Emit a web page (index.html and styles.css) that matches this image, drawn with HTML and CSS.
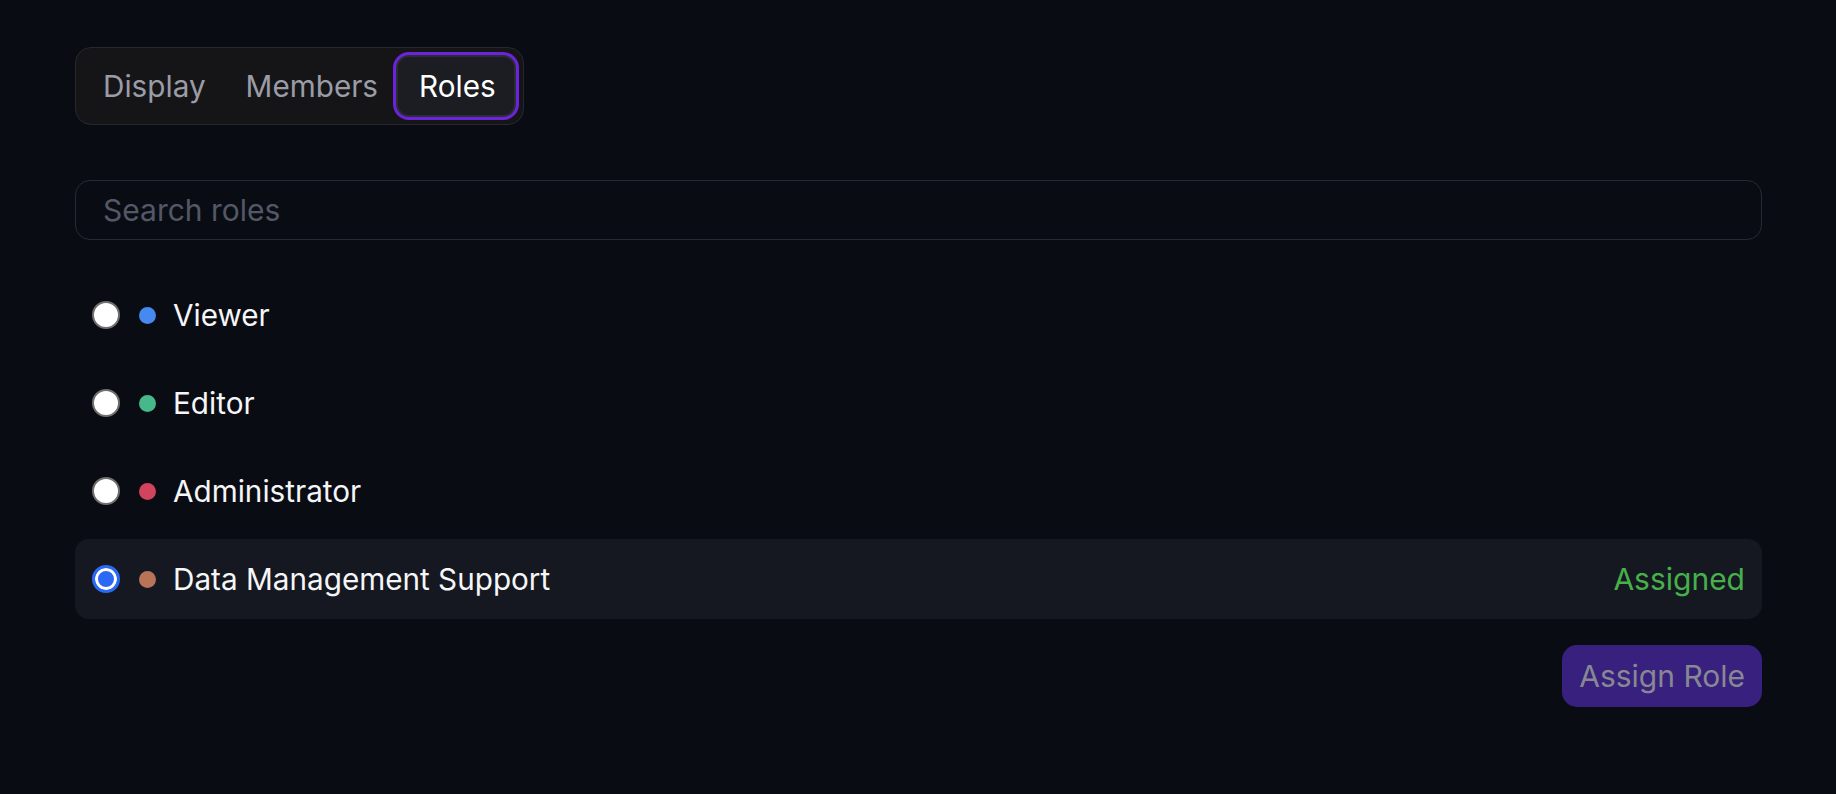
FILE: index.html
```html
<!DOCTYPE html>
<html lang="en">
<head>
<meta charset="utf-8">
<title>Roles</title>
<link rel="stylesheet" href="styles.css">
</head>
<body>
<main class="page">
  <div class="tabs">
    <button class="tab">Display</button>
    <button class="tab">Members</button>
    <button class="tab tab-active">Roles</button>
  </div>

  <div class="search">
    <input class="search-input" type="text" placeholder="Search roles">
  </div>

  <ul class="roles">
    <li class="role">
      <span class="radio"></span>
      <span class="dot dot-blue"></span>
      <span class="role-name">Viewer</span>
    </li>
    <li class="role">
      <span class="radio"></span>
      <span class="dot dot-green"></span>
      <span class="role-name">Editor</span>
    </li>
    <li class="role">
      <span class="radio"></span>
      <span class="dot dot-red"></span>
      <span class="role-name">Administrator</span>
    </li>
    <li class="role role-selected">
      <span class="radio radio-checked"></span>
      <span class="dot dot-brown"></span>
      <span class="role-name">Data Management Support</span>
      <span class="role-status">Assigned</span>
    </li>
  </ul>

  <div class="actions">
    <button class="assign-btn">Assign Role</button>
  </div>
</main>
</body>
</html>
```

FILE: styles.css
```css
* { box-sizing: border-box; }

html, body {
  margin: 0;
  padding: 0;
  background: #0a0c14;
}

body {
  font-family: Inter, "Noto Sans", sans-serif;
  color: #f3f4f6;
}

.page {
  padding: 47px 74px 40px 75px;
}

.tabs {
  display: inline-flex;
  align-items: center;
  background: #151518;
  border: 1px solid #262830;
  border-radius: 16px;
  padding: 7px;
}

.tab {
  font-family: inherit;
  font-size: 29.7px;
  height: 62px;
  padding: 0 18px;
  background: transparent;
  border: 2px solid transparent;
  border-radius: 13px;
  color: #9a9ca6;
  cursor: pointer;
}

.tab-active {
  color: #ffffff;
  background: #1c1d22;
  border-color: #2b2d35;
  box-shadow: 0 0 0 3px #6d22dc;
  padding: 0 18px 0 21px;
  margin-left: -2px;
}

.search {
  margin-top: 55px;
}

.search-input {
  width: 100%;
  height: 60px;
  border: 1.5px solid #272a35;
  border-radius: 15px;
  background: transparent;
  padding: 0 27px;
  font-family: inherit;
  font-size: 30px;
  color: #f3f4f6;
  outline: none;
}

.search-input::placeholder {
  color: #535866;
}

.roles {
  list-style: none;
  margin: 35px 0 0;
  padding: 0;
  display: flex;
  flex-direction: column;
  gap: 8px;
}

.role {
  display: flex;
  align-items: center;
  height: 80px;
  padding: 0 17px;
  border-radius: 14px;
}

.role-selected {
  background: #151820;
}

.radio {
  width: 28px;
  height: 28px;
  border-radius: 50%;
  background: #ffffff;
  border: 2px solid #6f6f6f;
  flex: none;
}

.radio-checked {
  background: #2b68f5;
  border: 3px solid #2b68f5;
  box-shadow: inset 0 0 0 3px #ffffff;
}

.dot {
  width: 17px;
  height: 17px;
  border-radius: 50%;
  margin-left: 19px;
  flex: none;
}

.dot-blue { background: #4689ef; }
.dot-green { background: #47b88a; }
.dot-red { background: #d1435f; }
.dot-brown { background: #b87456; }

.role-name {
  margin-left: 17px;
  font-size: 29.7px;
  color: #f5f6f8;
}

.role-status {
  margin-left: auto;
  font-size: 30px;
  color: #47b04b;
}

.actions {
  display: flex;
  justify-content: flex-end;
  margin-top: 26px;
}

.assign-btn {
  font-family: inherit;
  font-size: 30px;
  height: 62px;
  padding: 0 17px;
  border: none;
  border-radius: 15px;
  background: #37207e;
  color: #888893;
}
```
